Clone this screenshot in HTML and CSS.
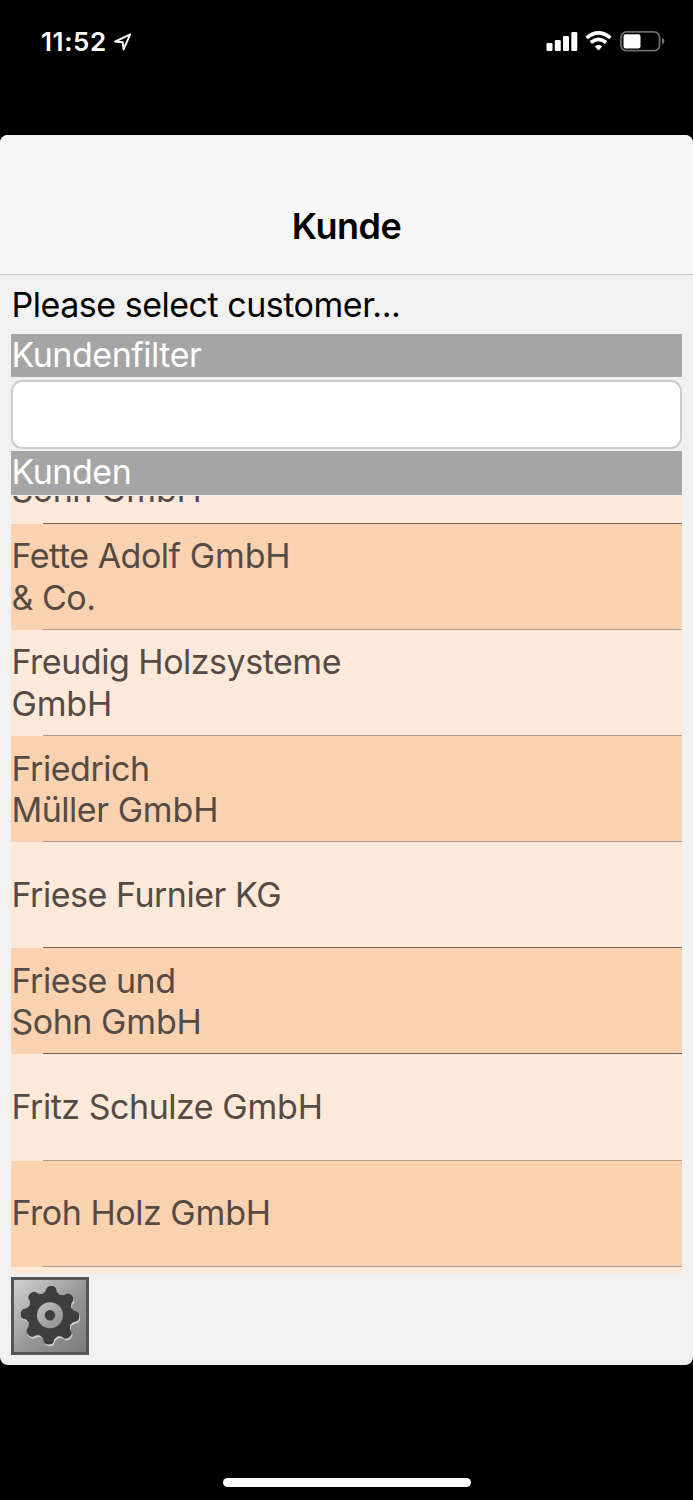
FILE: index.html
```html
<!DOCTYPE html>
<html lang="de">
<head>
<meta charset="utf-8">
<title>Kunde</title>
<link rel="stylesheet" href="styles.css">
</head>
<body>
<div class="phone">
  <header class="status">
    <div class="status-left">
      <span class="time">11:52</span>
      <svg class="location" width="20" height="20" viewBox="0 0 20 20"><path d="M2 9.600 17.200 2.300 10.600 17.400 9.700 10.300Z" fill="none" stroke="#fff" stroke-width="2" stroke-linejoin="round"/></svg>
    </div>
    <svg class="status-icons" width="120" height="24" viewBox="0 0 120 24">
      <g fill="#fff">
        <rect x="0.500" y="14" width="6" height="8" rx="1.300"/>
        <rect x="8.800" y="11" width="6" height="11" rx="1.300"/>
        <rect x="17" y="7" width="6" height="15" rx="1.300"/>
        <rect x="25.300" y="3" width="6" height="19" rx="1.300"/>
        <path d="M48.700 17.400Q52.500 14.800 56.300 17.400L52.500 21.600Z"/>
      </g>
      <g fill="none" stroke="#fff" stroke-width="3.600">
        <path d="M40.600 8.800Q52.500 -1.200 64.400 8.800"/>
        <path d="M44.800 13.500Q52.500 7.200 60.200 13.500"/>
      </g>
      <rect x="75" y="2.900" width="38.500" height="18.800" rx="5.500" fill="none" stroke="#6b6b6b" stroke-width="1.800"/>
      <rect x="77.500" y="5.300" width="17" height="14.200" rx="2.200" fill="#fff"/>
      <path d="M116 9Q118.400 9.800 118.400 12T116 15.400Z" fill="#777"/>
    </svg>
  </header>

  <main class="app">
    <div class="navbar"><h1 class="title">Kunde</h1></div>
    <div class="content">
      <p class="prompt">Please select customer...</p>
      <label class="bar" for="filter">Kundenfilter</label>
      <input class="filter" id="filter" type="text">
      <h2 class="bar bar-list">Kunden</h2>
      <div class="list">
        <div class="row strong"><span>Sohn <span class="legal">GmbH</span></span></div>
        <div class="row"><span>Fette Adolf <span class="legal">GmbH</span><br>&amp; Co.</span></div>
        <div class="row"><span>Freudig Holzsysteme<br><span class="legal">GmbH</span></span></div>
        <div class="row"><span>Friedrich<br>Müller <span class="legal">GmbH</span></span></div>
        <div class="row single strong"><span>Friese Furnier KG</span></div>
        <div class="row strong"><span>Friese und<br>Sohn <span class="legal">GmbH</span></span></div>
        <div class="row single"><span>Fritz Schulze <span class="legal">GmbH</span></span></div>
        <div class="row single"><span>Froh Holz <span class="legal">GmbH</span></span></div>
        <div class="row"></div>
      </div>
      <button class="settings" aria-label="Settings">
        <svg width="72" height="72" viewBox="-36 -36 72 72">
          <defs>
            <path id="tooth" d="M-10-19C-7-23-5.600-22.500-5.200-25.500Q-4.600-29.300 0-29.300T5.200-25.500C5.600-22.500 7-23 10-19Z"/>
            <g id="gear">
              <circle r="21.800"/>
              <use href="#tooth"/><use href="#tooth" transform="rotate(45)"/>
              <use href="#tooth" transform="rotate(90)"/><use href="#tooth" transform="rotate(135)"/>
              <use href="#tooth" transform="rotate(180)"/><use href="#tooth" transform="rotate(225)"/>
              <use href="#tooth" transform="rotate(270)"/><use href="#tooth" transform="rotate(315)"/>
            </g>
            <linearGradient id="ring" x1="0" y1="0" x2="1" y2="1"><stop offset="0" stop-color="#c2c2c2"/><stop offset="1" stop-color="#8c8c8c"/></linearGradient>
          </defs>
          <g transform="translate(.8 .9) rotate(3)" fill="#d2d2d2"><use href="#gear"/></g>
          <g transform="translate(0 -.8) rotate(3)" fill="#3e3e3e"><use href="#gear"/></g>
          <circle cy="-.8" r="13" fill="url(#ring)"/>
          <circle cy="-.8" r="5.200" fill="#3e3e3e"/>
        </svg>
      </button>
    </div>
  </main>

  <footer class="home"><div class="home-bar"></div></footer>
</div>
</body>
</html>
```

FILE: styles.css
```css
* { box-sizing: border-box; }

body {
  margin: 0;
  background: #000;
  font-family: Inter, "Liberation Sans", sans-serif;
}

.phone {
  display: flex;
  flex-direction: column;
  width: 693px;
  height: 1500px;
  overflow: hidden;
}

.status {
  display: flex;
  justify-content: space-between;
  align-items: flex-start;
  height: 135px;
  padding: 29px 27px 0 41px;
  color: #fff;
}

.status-left {
  display: flex;
  align-items: center;
  gap: 6px;
  height: 26px;
}

.time {
  font-size: 26px;
  font-weight: 600;
  line-height: 26px;
  letter-spacing: 0.600px;
}

.app {
  display: flex;
  flex-direction: column;
  height: 1230px;
  border-radius: 8px;
  background: #f1f1f1;
  overflow: hidden;
}

.navbar {
  display: flex;
  justify-content: center;
  align-items: flex-end;
  height: 140px;
  padding-bottom: 28px;
  border-bottom: 1px solid #c4c4c4;
  background: #f7f7f7;
}

.title {
  margin: 0;
  font-size: 36px;
  font-weight: 600;
  line-height: 40px;
  letter-spacing: -0.500px;
}

.content {
  display: flex;
  flex-direction: column;
  padding: 8px 11px 0;
  font-size: 34px;
  letter-spacing: -0.480px;
}

.prompt {
  margin: 0 0 7px;
  padding-left: 0.500px;
  line-height: 44px;
}

.bar {
  height: 43px;
  margin: 0;
  padding-left: 0.500px;
  font-size: 34px;
  font-weight: 400;
  line-height: 41px;
  color: #fff;
  background: #a5a5a5;
}

.filter {
  height: 69px;
  margin: 3px 0 2px;
  border: 2px solid #ccc;
  border-radius: 11px;
  background: #fff;
}

.bar-list { height: 44px; }

.list {
  display: flex;
  flex-direction: column;
  height: 779px;
  margin-top: 1px;
  overflow: hidden;
  color: #544b46;
}

.row {
  display: flex;
  flex: none;
  flex-direction: column;
  justify-content: center;
  height: 106.200px;
  padding-left: 0.500px;
  line-height: 41.300px;
  background:
    linear-gradient(#b29a88, #b29a88) 32px 100% / 100% 1px no-repeat,
    #fce9d9;
}

.row:nth-child(even) { background-color: #fbd2b0; }

.row.strong {
  background-image: linear-gradient(#756559, #756559);
}

.row.single { padding-bottom: 2px; }

.row:first-child {
  justify-content: flex-end;
  height: 27.500px;
  padding-bottom: 13px;
}

.legal { letter-spacing: -0.150px; }

.settings {
  display: flex;
  width: 78px;
  height: 78px;
  margin-top: 2px;
  padding: 0;
  border: 3px solid #555;
  background: linear-gradient(135deg, #d2d2d2, #969696 55%, #7b7b7b);
}

.home {
  display: flex;
  justify-content: center;
  padding-top: 113px;
}

.home-bar {
  width: 248px;
  height: 9px;
  border-radius: 5px;
  background: #fff;
}
```
